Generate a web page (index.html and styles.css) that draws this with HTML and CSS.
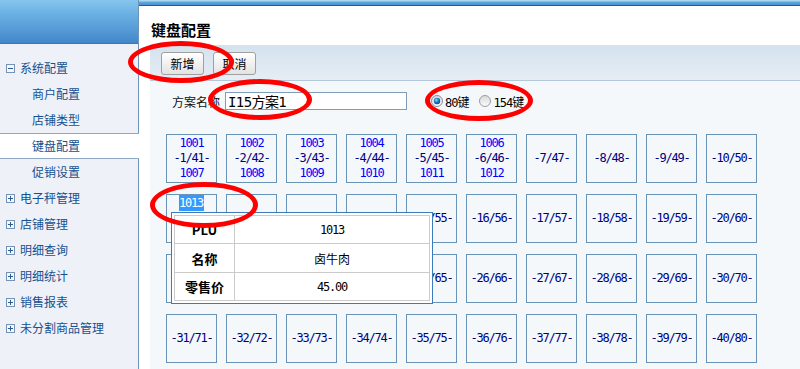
FILE: index.html
```html
<!DOCTYPE html>
<html lang="zh-CN">
<head>
<meta charset="utf-8">
<title>键盘配置</title>
<link rel="stylesheet" href="styles.css">
</head>
<body>
<div class="app">
  <aside class="sidebar">
    <div class="side-head"></div>
    <ul class="nav">
      <li class="grp"><svg class="tg" width="9" height="9" viewBox="0 0 9 9"><rect x="0.5" y="0.5" width="8" height="8" fill="#f3f6fa" stroke="#7693b3"/><path d="M2 4.5h5" stroke="#2d5e93"/></svg>系统配置</li>
      <li class="sub">商户配置</li>
      <li class="sub">店铺类型</li>
      <li class="sub active">键盘配置</li>
      <li class="sub">促销设置</li>
      <li class="grp"><svg class="tg" width="9" height="9" viewBox="0 0 9 9"><rect x="0.5" y="0.5" width="8" height="8" fill="#f3f6fa" stroke="#7693b3"/><path d="M2 4.5h5M4.5 2v5" stroke="#2d5e93"/></svg>电子秤管理</li>
      <li class="grp"><svg class="tg" width="9" height="9" viewBox="0 0 9 9"><rect x="0.5" y="0.5" width="8" height="8" fill="#f3f6fa" stroke="#7693b3"/><path d="M2 4.5h5M4.5 2v5" stroke="#2d5e93"/></svg>店铺管理</li>
      <li class="grp"><svg class="tg" width="9" height="9" viewBox="0 0 9 9"><rect x="0.5" y="0.5" width="8" height="8" fill="#f3f6fa" stroke="#7693b3"/><path d="M2 4.5h5M4.5 2v5" stroke="#2d5e93"/></svg>明细查询</li>
      <li class="grp"><svg class="tg" width="9" height="9" viewBox="0 0 9 9"><rect x="0.5" y="0.5" width="8" height="8" fill="#f3f6fa" stroke="#7693b3"/><path d="M2 4.5h5M4.5 2v5" stroke="#2d5e93"/></svg>明细统计</li>
      <li class="grp"><svg class="tg" width="9" height="9" viewBox="0 0 9 9"><rect x="0.5" y="0.5" width="8" height="8" fill="#f3f6fa" stroke="#7693b3"/><path d="M2 4.5h5M4.5 2v5" stroke="#2d5e93"/></svg>销售报表</li>
      <li class="grp"><svg class="tg" width="9" height="9" viewBox="0 0 9 9"><rect x="0.5" y="0.5" width="8" height="8" fill="#f3f6fa" stroke="#7693b3"/><path d="M2 4.5h5M4.5 2v5" stroke="#2d5e93"/></svg>未分割商品管理</li>
    </ul>
  </aside>
  <main class="main">
    <div class="top-strip"></div>
    <div class="panel">
      <h1 class="title">键盘配置</h1>
      <div class="work">
        <div class="toolbar">
          <button class="btn">新增</button>
          <button class="btn">取消</button>
        </div>
        <div class="form">
          <label class="lbl">方案名称</label>
          <input class="name" type="text" value="I15方案1">
          <span class="opt">
            <svg class="radio" width="12" height="12" viewBox="0 0 12 12"><defs><linearGradient id="rg" x1="0" y1="0" x2="0" y2="1"><stop offset="0" stop-color="#d9d9d9"/><stop offset="1" stop-color="#fbfbfb"/></linearGradient><radialGradient id="dg" cx="0.4" cy="0.35" r="0.6"><stop offset="0" stop-color="#8fe0ff"/><stop offset="0.5" stop-color="#2a8ad0"/><stop offset="1" stop-color="#0f4f8f"/></radialGradient></defs><circle cx="6" cy="6" r="5.5" fill="url(#rg)" stroke="#8a8f96"/><circle cx="6" cy="6" r="3.2" fill="url(#dg)"/></svg>
            <span class="otext">80键</span>
          </span>
          <span class="opt opt2">
            <svg class="radio" width="12" height="12" viewBox="0 0 12 12"><circle cx="6" cy="6" r="5.5" fill="url(#rg)" stroke="#9a9ea3"/></svg>
            <span class="otext">154键</span>
          </span>
        </div>
        <div class="keys">
          <div class="key"><span class="plu">1001</span><span class="kn">-1/41-</span><span class="plu">1007</span></div>
          <div class="key"><span class="plu">1002</span><span class="kn">-2/42-</span><span class="plu">1008</span></div>
          <div class="key"><span class="plu">1003</span><span class="kn">-3/43-</span><span class="plu">1009</span></div>
          <div class="key"><span class="plu">1004</span><span class="kn">-4/44-</span><span class="plu">1010</span></div>
          <div class="key"><span class="plu">1005</span><span class="kn">-5/45-</span><span class="plu">1011</span></div>
          <div class="key"><span class="plu">1006</span><span class="kn">-6/46-</span><span class="plu">1012</span></div>
          <div class="key"><span class="kn">-7/47-</span></div>
          <div class="key"><span class="kn">-8/48-</span></div>
          <div class="key"><span class="kn">-9/49-</span></div>
          <div class="key"><span class="kn">-10/50-</span></div>

          <div class="key"><span class="plu"><span class="sel">1013</span></span><span class="kn">-11/51-</span><span class="plu">&nbsp;</span></div>
          <div class="key"><span class="kn">-12/52-</span></div>
          <div class="key"><span class="kn">-13/53-</span></div>
          <div class="key"><span class="kn">-14/54-</span></div>
          <div class="key"><span class="kn">-15/55-</span></div>
          <div class="key"><span class="kn">-16/56-</span></div>
          <div class="key"><span class="kn">-17/57-</span></div>
          <div class="key"><span class="kn">-18/58-</span></div>
          <div class="key"><span class="kn">-19/59-</span></div>
          <div class="key"><span class="kn">-20/60-</span></div>

          <div class="key"><span class="kn">-21/61-</span></div>
          <div class="key"><span class="kn">-22/62-</span></div>
          <div class="key"><span class="kn">-23/63-</span></div>
          <div class="key"><span class="kn">-24/64-</span></div>
          <div class="key"><span class="kn">-25/65-</span></div>
          <div class="key"><span class="kn">-26/66-</span></div>
          <div class="key"><span class="kn">-27/67-</span></div>
          <div class="key"><span class="kn">-28/68-</span></div>
          <div class="key"><span class="kn">-29/69-</span></div>
          <div class="key"><span class="kn">-30/70-</span></div>

          <div class="key"><span class="kn">-31/71-</span></div>
          <div class="key"><span class="kn">-32/72-</span></div>
          <div class="key"><span class="kn">-33/73-</span></div>
          <div class="key"><span class="kn">-34/74-</span></div>
          <div class="key"><span class="kn">-35/75-</span></div>
          <div class="key"><span class="kn">-36/76-</span></div>
          <div class="key"><span class="kn">-37/77-</span></div>
          <div class="key"><span class="kn">-38/78-</span></div>
          <div class="key"><span class="kn">-39/79-</span></div>
          <div class="key"><span class="kn">-40/80-</span></div>
        </div>
      </div>
    </div>
  </main>
</div>

<div class="tip">
  <table class="tip-table">
    <tr class="r1"><th>PLU</th><td class="num">1013</td></tr>
    <tr class="r2"><th>名称</th><td class="cn">卤牛肉</td></tr>
    <tr class="r3"><th>零售价</th><td class="num">45.00</td></tr>
  </table>
</div>

<div class="mark m1"></div>
<div class="mark m2"></div>
<div class="mark m3"></div>
<div class="mark m4"></div>
</body>
</html>
```

FILE: styles.css
```css
* { box-sizing: border-box; }
html, body { margin: 0; padding: 0; }
body {
  position: relative;
  width: 800px;
  height: 369px;
  overflow: hidden;
  font-family: "Noto Sans CJK SC", sans-serif;
  font-size: 12px;
  color: #000;
  background: #fff;
}
.app { display: flex; height: 369px; }

/* sidebar */
.sidebar {
  width: 138px;
  flex: none;
  background: #eef2f8;
  display: flex;
  flex-direction: column;
}
.side-head {
  height: 44px;
  background: linear-gradient(#86c6ee 0, #6cb2e4 30%, #4f94d2 80%, #4286c8 100%);
  border-bottom: 1px solid #3876b6;
}
.nav { list-style: none; margin: 0; padding: 11px 0 0; }
.nav li {
  height: 26px;
  display: flex;
  align-items: center;
  color: #16508e;
  white-space: nowrap;
  line-height: 1;
}
.nav .grp { padding-left: 6px; }
.nav .grp .tg { margin-right: 5px; flex: none; }
.nav .sub { padding-left: 32px; }
.nav .active {
  background: #fff;
  border-top: 1px solid #8fa8c3;
  border-bottom: 1px solid #8fa8c3;
  margin-right: -1px;
  position: relative;
  z-index: 1;
}

/* main */
.main {
  flex: 1;
  min-width: 0;
  display: flex;
  flex-direction: column;
  border-left: 1px solid #6f92b8;
}
.top-strip {
  height: 6px;
  flex: none;
  background: linear-gradient(#a9d8f5 0, #a9d8f5 1px, #62a8dd 2px, #4a8fcf 5px);
  border-bottom: 1px solid #1f5ea4;
}
.panel {
  flex: 1;
  display: flex;
  flex-direction: column;
  background: #fff;
}
.title {
  margin: 0;
  height: 39px;
  padding: 14px 0 0 12px;
  font-size: 15px;
  font-weight: bold;
  line-height: 20px;
  flex: none;
}
.work {
  flex: 1;
  margin-left: 11px;
  background: #f4f8fb;
}
.toolbar {
  height: 36px;
  padding: 7px 0 0 11px;
  display: flex;
  align-items: flex-start;
  gap: 9px;
  background: linear-gradient(#d4e2ee, #e5edf5);
  border-bottom: 1px solid #b3c8db;
}
.btn {
  width: 43px;
  height: 23px;
  padding: 0;
  border: 1px solid #a0a0a0;
  border-radius: 3px;
  background: linear-gradient(#ffffff, #e3e3e3);
  font-family: "Noto Sans CJK SC", sans-serif;
  font-size: 12px;
  color: #000;
}
.form {
  display: flex;
  align-items: center;
  height: 18px;
  margin-top: 11px;
  padding-left: 22px;
}
.lbl { width: 53px; flex: none; color: #111; }
.name {
  width: 182px;
  height: 18px;
  margin: 0;
  padding: 0 2px;
  border: 1px solid #7f9db9;
  background: #fff;
  font-family: "DejaVu Sans Mono", "Noto Sans CJK SC", monospace;
  font-size: 14px;
  letter-spacing: -0.6px;
  color: #000;
}
.opt { display: flex; align-items: center; margin-left: 24px; }
.opt2 { margin-left: 11px; }
.radio { flex: none; }
.otext {
  margin-left: 2px;
  font-family: "DejaVu Sans Mono", "Noto Sans CJK SC", monospace;
  font-size: 12px;
  letter-spacing: -1px;
}

/* keys */
.keys {
  display: grid;
  grid-template-columns: repeat(10, 51px);
  grid-auto-rows: 49px;
  column-gap: 9px;
  row-gap: 11px;
  margin: 24px 0 0 16px;
}
.key {
  border: 1px solid #6a93b8;
  background: #f4f8fb;
  display: flex;
  flex-direction: column;
  align-items: center;
  justify-content: center;
  font-family: "DejaVu Sans Mono", monospace;
  font-size: 12px;
  letter-spacing: -1.2px;
  line-height: 15px;
  white-space: nowrap;
}
.plu { color: #0000ff; }
.kn { color: #000080; }
.sel { background: #3399ff; color: #fff; padding: 1px 1px 1px 0; }

/* tooltip */
.tip {
  position: absolute;
  left: 171px;
  top: 212px;
  width: 262px;
  height: 92px;
  border: 1px solid #3d7bbd;
  background: #fff;
  padding: 2px;
  z-index: 5;
}
.tip-table {
  width: 100%;
  height: 100%;
  border-collapse: collapse;
}
.tip-table th, .tip-table td {
  border: 1px solid #cbcbcb;
  padding: 0;
  text-align: center;
}
.tip-table th {
  width: 60px;
  font-size: 13px;
  font-weight: bold;
}
.tip-table .r1 th, .tip-table .r1 td { height: 28px; }
.tip-table .r2 th, .tip-table .r2 td { height: 29px; }
.tip-table .num {
  font-family: "DejaVu Sans Mono", monospace;
  font-size: 12px;
  letter-spacing: -1.2px;
}
.tip-table .cn { font-size: 12px; }

/* red annotation ellipses */
.mark {
  position: absolute;
  border: 5px solid #f00;
  border-radius: 50%;
  z-index: 10;
}
.m1 { left: 128px; top: 41px; width: 106px; height: 42px; }
.m2 { left: 208px; top: 79px; width: 104px; height: 41px; }
.m3 { left: 425px; top: 80px; width: 108px; height: 41px; }
.m4 { left: 150px; top: 182px; width: 108px; height: 46px; }
```
